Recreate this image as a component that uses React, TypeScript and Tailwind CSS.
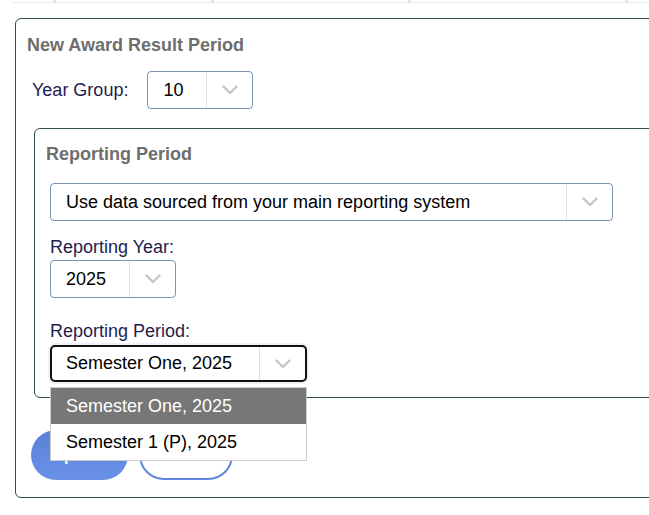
import React from "react";

function Chevron() {
  return (
    <svg width="16" height="10" viewBox="0 0 16 10" fill="none">
      <polyline points="1.5,1.5 8,8 14.5,1.5" stroke="#c6c6c6" strokeWidth="2.4" strokeLinecap="round" strokeLinejoin="round" />
    </svg>
  );
}

function Select({ value, w, focused }: { value: string; w: string; focused?: boolean }) {
  return (
    <div
      className={
        focused
          ? `flex h-[37px] ${w} items-stretch rounded-[5px] border-[2.5px] border-[#111111] bg-white shadow-[0_0_0_2px_#eef2f8]`
          : `flex h-[38px] ${w} items-stretch rounded-[4px] border border-[#7a93b1] bg-white`
      }
    >
      <div className={`flex flex-1 items-center ${focused ? "pl-[14px]" : "pl-[15px]"} text-[18px] text-black`}>{value}</div>
      <div className="w-px bg-[#dedede]" />
      <div className="flex w-[45px] items-center justify-center">
        <Chevron />
      </div>
    </div>
  );
}

export default function App() {
  return (
    <div className="h-[515px] w-full overflow-hidden bg-white font-['Liberation_Sans',Arial,sans-serif] leading-[21px]">
      {/* top table remnant */}
      <div className="ml-[12px] flex h-[3px] w-[700px]">
        <div className="w-[41px] border-b border-[#ececec]" />
        <div className="w-[3px] bg-[#e6e6e6]" />
        <div className="w-[155px] border-b border-[#ececec]" />
        <div className="w-[3px] bg-[#e6e6e6]" />
        <div className="w-[194px] border-b border-[#ececec]" />
        <div className="w-[3px] bg-[#e6e6e6]" />
        <div className="w-[214px] border-b border-[#ececec]" />
        <div className="w-[3px] bg-[#e6e6e6]" />
        <div className="flex-1 border-b border-[#ececec]" />
      </div>

      <div className="ml-[15px] mt-[15px] w-[680px] rounded-[6px] border border-[#2e4d4d] pb-[17px] pt-[16px]">
        <div className="pl-[11px] text-[18px] font-bold text-[#6e6e6e]">New Award Result Period</div>

        <div className="ml-[16px] mt-[15px] flex items-center">
          <span className="pt-[1px] text-[18px] text-[#1f1d4e]">Year Group:</span>
          <div className="ml-[19px]">
            <Select value="10" w="w-[106px]" />
          </div>
        </div>

        <div className="relative ml-[18px] mt-[19px] w-[660px] rounded-[6px] border border-[#2e4d4d] pb-[15px] pl-[15px] pt-[15px]">
          <div className="-ml-[4px] text-[18px] font-bold text-[#6e6e6e]">Reporting Period</div>
          <div className="mt-[18px]">
            <Select value="Use data sourced from your main reporting system" w="w-[563px]" />
          </div>
          <div className="mt-[16px] text-[18px] text-[#1f1d4e]">Reporting Year:</div>
          <div className="mt-[2px]">
            <Select value="2025" w="w-[126px]" />
          </div>
          <div className="mt-[23px] text-[18px] text-[#1f1d4e]">Reporting Period:</div>
          <div className="relative mt-[3px] w-[257px]">
            <Select value="Semester One, 2025" w="w-[257px]" focused />
            <div className="absolute left-0 top-[42px] z-10 w-[257px] border border-[#cccccc] bg-white">
              <div className="flex h-[36px] items-center bg-[#777777] pl-[15px] text-[18px] text-white">Semester One, 2025</div>
              <div className="flex h-[36px] items-center pl-[15px] text-[18px] text-black">Semester 1 (P), 2025</div>
            </div>
          </div>
        </div>

        <div className="ml-[15px] mt-[32px] flex gap-[11px]">
          <button className="flex h-[50px] w-[97px] items-center justify-center rounded-full bg-gradient-to-b from-[#5a80d8] to-[#6a91e8] text-[16px] font-bold text-white">
            Update
          </button>
          <button className="flex h-[50px] w-[94px] items-center justify-center rounded-full border-2 border-[#5f86dc] bg-white text-[16px] font-bold text-[#5f86dc]">
            Cancel
          </button>
        </div>
      </div>
    </div>
  );
}
